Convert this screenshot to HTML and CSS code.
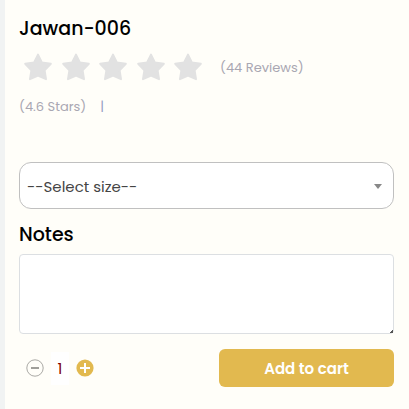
FILE: index.html
```html
<!DOCTYPE html>
<html lang="en">
<head>
    <meta charset="UTF-8">
    <meta name="viewport" content="width=device-width, initial-scale=1.0">
    <title>Jawan-006</title>
    <link rel="stylesheet" href="styles.css">
</head>
<body>
    <svg class="sprite" aria-hidden="true">
        <symbol id="star" viewBox="0 0 28 28">
            <path d="M14 1.6 L17.9 9.4 L26.8 10.8 L20.6 17.4 L22 26.2 L14 22.6 L6 26.2 L7.4 17.4 L1.2 10.8 L10.1 9.4 Z" fill="#e2e2e2" stroke="#e2e2e2" stroke-width="2" stroke-linejoin="round"/>
        </symbol>
    </svg>
    <main class="product">
        <h1 class="title">Jawan-006</h1>
        <div class="rating">
            <div class="stars">
                <svg class="star"><use href="#star"/></svg>
                <svg class="star"><use href="#star"/></svg>
                <svg class="star"><use href="#star"/></svg>
                <svg class="star"><use href="#star"/></svg>
                <svg class="star"><use href="#star"/></svg>
            </div>
            <span class="muted">(44 Reviews)</span>
        </div>
        <div class="summary">
            <span class="muted">(4.6 Stars)</span>
            <span class="muted divider">|</span>
        </div>

        <form class="order">
            <div class="select-box">
                <select id="size" name="size" aria-label="Size">
                    <option>--Select size--</option>
                </select>
                <svg class="arrow" viewBox="0 0 8 5" aria-hidden="true"><path d="M0 0H8L4 5Z" fill="#888"/></svg>
            </div>

            <label class="title" for="notes">Notes</label>
            <textarea id="notes" name="notes"></textarea>

            <div class="actions">
                <div class="quantity">
                    <button type="button" class="step" aria-label="Decrease quantity">
                        <svg viewBox="0 0 18 18"><circle cx="9" cy="9" r="8.2" fill="none" stroke="#aaa9a5"/><path d="M5 9H13" stroke="#a09f9a" stroke-width="2"/></svg>
                    </button>
                    <input type="text" class="count" value="1" aria-label="Quantity">
                    <button type="button" class="step" aria-label="Increase quantity">
                        <svg viewBox="0 0 18 18"><circle cx="9" cy="9" r="8.6" fill="#e2b94f"/><path d="M4 9H14M9 4V14" stroke="#fff" stroke-width="2"/></svg>
                    </button>
                </div>
                <button type="submit" class="add">Add to cart</button>
            </div>
        </form>
    </main>
</body>
</html>
```

FILE: styles.css
```css
* {
    box-sizing: border-box;
}

body {
    margin: 0;
    min-height: 100vh;
    border-left: 5px solid #f1f3f3;
    background-color: #fffef9;
    font-family: Poppins, Inter, sans-serif;
    color: #000;
}

.sprite {
    display: none;
}

.product {
    padding: 15px 15px 22px 14px;
}

.title {
    display: block;
    margin: 0;
    font-size: 19px;
    font-weight: 500;
    line-height: 28px;
}

.rating {
    display: flex;
    align-items: center;
    gap: 15px;
    height: 50px;
}

.stars {
    display: flex;
    justify-content: space-between;
    width: 186px;
    padding: 0 2px 2px 4px;
}

.star {
    width: 30px;
    height: 28px;
}

.muted {
    font-size: 13px;
    line-height: 20px;
    color: #a9a7b2;
}

.summary {
    display: flex;
    gap: 14px;
    padding-top: 4px;
}

.divider {
    color: #959fc2;
}

.order {
    margin-top: 45px;
}

.select-box {
    position: relative;
    margin-bottom: 12px;
}

.select-box select {
    display: block;
    appearance: none;
    width: 100%;
    height: 47px;
    padding: 2px 30px 0 7px;
    border: 1px solid #c0c0c0;
    border-radius: 12px;
    background-color: #fff;
    font-family: inherit;
    font-size: 15px;
    color: #444;
}

.arrow {
    position: absolute;
    top: 22px;
    right: 12px;
    width: 8px;
    height: 5px;
    pointer-events: none;
}

textarea {
    display: block;
    width: 100%;
    height: 80px;
    margin-top: 5px;
    padding: 8px;
    border: 1px solid #dcdfe2;
    border-radius: 4px;
    background-color: #fff;
    font-family: inherit;
    font-size: 15px;
    resize: vertical;
}

/* small corner mark for the resize grip */
textarea::-webkit-resizer {
    background: linear-gradient(135deg, transparent 88%, #555 88%);
}

.actions {
    display: flex;
    justify-content: space-between;
    align-items: center;
    margin-top: 15px;
}

.quantity {
    display: flex;
    align-items: center;
    gap: 7px;
    padding-left: 7px;
}

.step {
    width: 18px;
    height: 18px;
    padding: 0;
    border: 0;
    background: none;
    cursor: pointer;
}

.step svg {
    display: block;
    width: 18px;
    height: 18px;
}

.count {
    width: 18px;
    height: 33px;
    padding: 0;
    border: 0;
    background-color: #fff;
    font-family: inherit;
    font-size: 15px;
    text-align: center;
    color: #800000;
}

.add {
    flex: 0 0 175px;
    height: 38px;
    border: 0;
    border-radius: 6px;
    background-color: #e2b94f;
    font-family: inherit;
    font-size: 15px;
    font-weight: 600;
    color: #fff;
    cursor: pointer;
}
```
